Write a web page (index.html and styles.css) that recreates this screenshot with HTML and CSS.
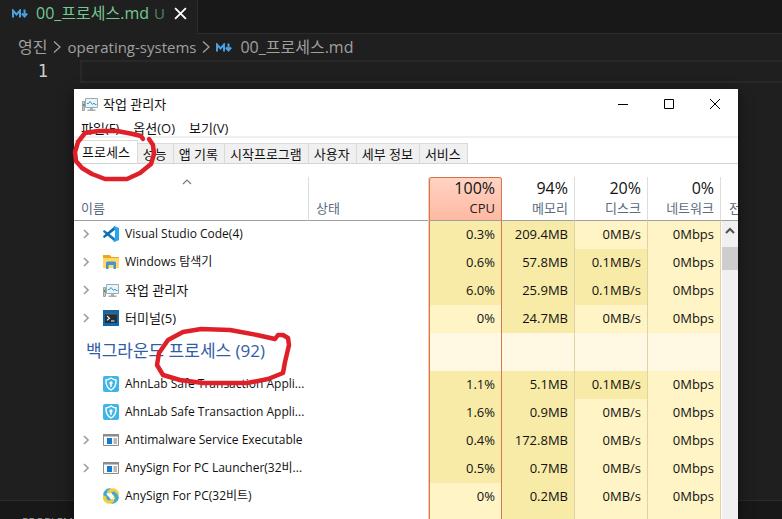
FILE: index.html
```html
<!DOCTYPE html>
<html lang="ko">
<head>
<meta charset="utf-8">
<title>작업 관리자</title>
<link rel="stylesheet" href="styles.css">
</head>
<body>
<svg class="defs" aria-hidden="true">
  <symbol id="markdown" viewBox="0 0 16 9"><path d="M1 8.500V1.500L4.500 5.500L8 1.500V8.500M12.500 .500V7M9.800 4.500L12.500 7.500L15.200 4.500" fill="none" stroke="#4a9fe0" stroke-width="2"/></symbol>
  <symbol id="chevron" viewBox="0 0 8 14"><path d="M1 1.500L7 7L1 12.500" fill="none" stroke="currentColor" stroke-width="1.300"/></symbol>
  <symbol id="expand" viewBox="0 0 6 10"><path d="M1 1L5 5L1 9" fill="none" stroke="#a0a0a0" stroke-width="1.700"/></symbol>
  <symbol id="monitor" viewBox="0 0 16 16"><path d="M3.500 2.500H15.500V11.500H3.500Z" fill="#e8f5fc" stroke="#a2a9ad"/><path d="M5 7.500H6.500L8 5.500L10.500 8.500L12 7L13 8.500H14.500" fill="none" stroke="#3c93c8"/><path d="M8 12H11V13.500H13.500V15H5.500V13.500H8Z" fill="#a7adb1"/><path d="M.500 5.500H2.500V14.500H.500Z" fill="#c4c8ca" stroke="#9ba1a5"/><path d="M1 8H2.500V10H1Z" fill="#41a548"/></symbol>
  <symbol id="vscode" viewBox="0 0 16 16"><path d="M0 5L1.500 4L12 12.200V16L.300 6Z" fill="#1479bd"/><path d="M0 11L1.500 12L12 3.800V0L.300 10Z" fill="#0b6dad"/><path d="M11.500 0L16 2V14L11.500 16L10.500 15.300L12 12V4L10.500 .700Z" fill="#29a5ec"/></symbol>
  <symbol id="folder" viewBox="0 0 16 16"><path d="M0 1H7L8.500 3H16V14H0Z" fill="#e5a91b"/><path d="M0 4H16V14H0Z" fill="#ffd76a"/><path d="M3 15V9Q3 7.500 4.500 7.500H11.500Q13 7.500 13 9V15H10.500V11H5.500V15Z" fill="#4794cc"/></symbol>
  <symbol id="terminal" viewBox="0 0 16 16"><path d="M0 0H16V16H0Z" fill="#0e68ae"/><path d="M2 3H14V13H2Z" fill="#252d35"/><path d="M2 3H14V4.500H2Z" fill="#56616a"/><path d="M4 6L6.500 8.200L4 10.400M8 11H11.500" fill="none" stroke="#fff" stroke-width="1.100"/></symbol>
  <symbol id="shield" viewBox="0 0 16 16"><rect width="16" height="16" rx="2" fill="#3fb5e5"/><path d="M8 2Q10.500 3.800 13 4Q13.500 11 8 14Q2.500 11 3 4Q5.500 3.800 8 2Z" fill="none" stroke="#fff" stroke-width="1.400"/><circle cx="8" cy="7" r="1.700" fill="#fff"/><path d="M7.300 7H8.700V11H7.300Z" fill="#fff"/></symbol>
  <symbol id="program" viewBox="0 0 16 16"><path d="M.500 2.500H15.500V13.500H.500Z" fill="#fafafa" stroke="#8c8c8c"/><path d="M0 2H16V4.500H0Z" fill="#8c8c8c"/><path d="M4 6H9V12H4Z" fill="#147bd1"/><path d="M10.500 7H14M10.500 9H14M10.500 11H14" stroke="#777"/></symbol>
  <symbol id="anysign" viewBox="0 0 16 16"><g fill="none" stroke-width="3.400"><path d="M6 11.500L2.800 8.300Q1 6 3 3.800Q5.500 1 8.500 2.800L11 5" stroke="#43a8cf"/><path d="M5 4.500L8 2.500Q11 1 13.200 3.500Q15.200 6.200 13.200 8.500L11 10.500" stroke="#f2cd3d"/><path d="M10 4.500L13.200 7.700Q15 10 13 12.200Q10.500 15 7.500 13.200L5 11" stroke="#43a8cf"/><path d="M10.500 12L8 13.500Q5 15 2.800 12.500Q1 10.500 2 8" stroke="#f2cd3d"/></g></symbol>
</svg>

<div class="editor">
  <div class="tabs">
    <div class="tab">
      <svg class="md"><use href="#markdown"/></svg>
      <span class="file">00_프로세스.md</span><span class="status">U</span>
      <button class="tab-close" aria-label="닫기"><svg viewBox="0 0 12 12"><path d="M1 1L11 11M11 1L1 11" fill="none" stroke="#fff" stroke-width="1.700"/></svg></button>
    </div>
    <div class="tabs-rest"></div>
  </div>
  <nav class="crumbs">
    <span class="file">영진</span><svg class="sep"><use href="#chevron"/></svg><span>operating-systems</span><svg class="sep"><use href="#chevron"/></svg><svg class="md"><use href="#markdown"/></svg><span class="file">00_프로세스.md</span>
  </nav>
  <div class="code"><span class="line-no">1</span><div class="line"></div></div>
  <div class="panel"><span>PROBLEMS</span></div>
</div>

<main class="window">
  <header class="titlebar">
    <svg class="icon"><use href="#monitor"/></svg><h1>작업 관리자</h1>
    <div class="controls">
      <button aria-label="최소화"><svg viewBox="0 0 12 12"><path d="M1 6.500H11" stroke="#000"/></svg></button>
      <button aria-label="최대화"><svg viewBox="0 0 12 12"><path d="M1.500 1.500H10.500V10.500H1.500Z" fill="none" stroke="#000"/></svg></button>
      <button aria-label="닫기"><svg viewBox="0 0 12 12"><path d="M1 1L11 11M11 1L1 11" stroke="#000"/></svg></button>
    </div>
  </header>
  <nav class="menu"><button>파일(F)</button><button>옵션(O)</button><button>보기(V)</button></nav>
  <div class="views" role="tablist">
    <button role="tab" aria-selected="true" class="active">프로세스</button><button role="tab">성능</button><button role="tab">앱 기록</button><button role="tab">시작프로그램</button><button role="tab">사용자</button><button role="tab">세부 정보</button><button role="tab">서비스</button>
  </div>
  <div class="list">
    <table>
      <colgroup><col class="c-name"><col><col class="c-num"><col class="c-num"><col class="c-num"><col class="c-num"><col class="c-end"></colgroup>
      <thead>
        <tr>
          <th class="name"><svg class="sort" viewBox="0 0 10 6"><path d="M1 5L5 1L9 5" fill="none" stroke="#777" stroke-width="1.200"/></svg>이름</th>
          <th class="state">상태</th>
          <th class="num cpu"><b>100%</b>CPU</th>
          <th class="num"><b>94%</b>메모리</th>
          <th class="num"><b>20%</b>디스크</th>
          <th class="num"><b>0%</b>네트워크</th>
          <th class="end">전</th>
        </tr>
      </thead>
      <tbody>
        <tr><td colspan="2"><div class="proc"><svg class="arrow"><use href="#expand"/></svg><svg class="icon"><use href="#vscode"/></svg>Visual Studio Code(4)</div></td><td class="num cpu mid">0.3%</td><td class="num mid">209.4MB</td><td class="num">0MB/s</td><td class="num">0Mbps</td><td></td></tr>
        <tr><td colspan="2"><div class="proc"><svg class="arrow"><use href="#expand"/></svg><svg class="icon"><use href="#folder"/></svg>Windows 탐색기</div></td><td class="num cpu mid">0.6%</td><td class="num mid">57.8MB</td><td class="num mid">0.1MB/s</td><td class="num">0Mbps</td><td></td></tr>
        <tr><td colspan="2"><div class="proc hangul"><svg class="arrow"><use href="#expand"/></svg><svg class="icon"><use href="#monitor"/></svg>작업 관리자</div></td><td class="num cpu mid">6.0%</td><td class="num mid">25.9MB</td><td class="num mid">0.1MB/s</td><td class="num">0Mbps</td><td></td></tr>
        <tr><td colspan="2"><div class="proc hangul"><svg class="arrow"><use href="#expand"/></svg><svg class="icon"><use href="#terminal"/></svg>터미널(5)</div></td><td class="num cpu">0%</td><td class="num mid">24.7MB</td><td class="num">0MB/s</td><td class="num">0Mbps</td><td></td></tr>
        <tr class="group"><td colspan="2">백그라운드 프로세스 (92)</td><td class="num cpu"></td><td class="num"></td><td class="num"></td><td class="num"></td><td></td></tr>
        <tr><td colspan="2"><div class="proc"><span class="arrow"></span><svg class="icon"><use href="#shield"/></svg>AhnLab Safe Transaction Appli...</div></td><td class="num cpu mid">1.1%</td><td class="num mid">5.1MB</td><td class="num mid">0.1MB/s</td><td class="num">0Mbps</td><td></td></tr>
        <tr><td colspan="2"><div class="proc"><span class="arrow"></span><svg class="icon"><use href="#shield"/></svg>AhnLab Safe Transaction Appli...</div></td><td class="num cpu mid">1.6%</td><td class="num mid">0.9MB</td><td class="num">0MB/s</td><td class="num">0Mbps</td><td></td></tr>
        <tr><td colspan="2"><div class="proc"><svg class="arrow"><use href="#expand"/></svg><svg class="icon"><use href="#program"/></svg>Antimalware Service Executable</div></td><td class="num cpu mid">0.4%</td><td class="num mid">172.8MB</td><td class="num">0MB/s</td><td class="num">0Mbps</td><td></td></tr>
        <tr><td colspan="2"><div class="proc"><svg class="arrow"><use href="#expand"/></svg><svg class="icon"><use href="#program"/></svg>AnySign For PC Launcher(32비...</div></td><td class="num cpu mid">0.5%</td><td class="num mid">0.7MB</td><td class="num">0MB/s</td><td class="num">0Mbps</td><td></td></tr>
        <tr><td colspan="2"><div class="proc"><span class="arrow"></span><svg class="icon"><use href="#anysign"/></svg>AnySign For PC(32비트)</div></td><td class="num cpu">0%</td><td class="num mid">0.2MB</td><td class="num">0MB/s</td><td class="num">0Mbps</td><td></td></tr>
        <tr><td colspan="2"></td><td class="num cpu"></td><td class="num mid"></td><td class="num"></td><td class="num"></td><td></td></tr>
      </tbody>
    </table>
    <div class="scrollbar"><svg viewBox="0 0 10 8"><path d="M1 6L5 2L9 6" fill="none" stroke="#505050" stroke-width="2"/></svg><div class="thumb"></div></div>
  </div>
</main>

<svg class="ink" aria-hidden="true" fill="none" stroke="#df2029" stroke-width="4.500" stroke-linecap="round" stroke-linejoin="round">
  <path d="M143 139L141 136L133 134L117 131L98 131L85 133L78 142L75 152L76 161L82 168L92 174L105 179L127 179L140 173L151 164L154 154L153 145L149 139"/>
  <path d="M275 339L257 335L230 330L201 329L183 332L168 340L159 353L157 365L163 375L180 380L203 383L247 383L268 379L283 373L285 362L289 345L288 338L283 335L278 335L275 339"/>
</svg>
</body>
</html>
```
FILE: styles.css
```css
* { box-sizing: border-box; }
body {
  margin: 0;
  height: 100vh;
  overflow: hidden;
  background: #1f1f1f;
  font: 13px/20px "Open Sans", "Noto Sans CJK KR", sans-serif;
}
button { border: 0; padding: 0; background: none; font: inherit; color: inherit; }
svg { display: block; flex: none; }
.defs { position: absolute; width: 0; height: 0; }

.editor { height: 100vh; display: flex; flex-direction: column; color: #a0a0a0; font-size: 15px; }
.file { font-size: 16px; }
.tabs { display: flex; height: 34px; }
.tab { display: flex; align-items: center; padding: 0 10px 8px 12px; color: #73c991; border-right: 1px solid #2b2b2b; }
.md { width: 16px; height: 9px; margin-right: 8px; }
.status { margin-left: 5px; color: #4f8762; }
.tab-close { margin-left: 9px; }
.tab-close svg { width: 13px; height: 13px; }
.tabs-rest { flex: 1; background: #181818; border-bottom: 1px solid #2b2b2b; }
.crumbs { display: flex; align-items: center; height: 26px; padding-left: 18px; }
.sep { width: 8px; height: 14px; margin: 0 6px; }
.code { flex: 1; display: flex; }
.line-no { width: 80px; padding-right: 32px; text-align: right; color: #ccc; font: 17px/22px "DejaVu Sans Mono", monospace; }
.line { flex: 1; height: 23px; border: 2px solid #282828; border-right: 0; }
.panel { height: 19px; padding: 11px 22px 0; background: #181818; border-top: 1px solid #2b2b2b; font-size: 11px; overflow: hidden; }

.window {
  position: absolute;
  inset: 89px 44px 0 74px;
  overflow: hidden;
  background: #fff;
  color: #111;
  box-shadow: 0 4px 12px #0008;
}
.icon { width: 16px; height: 16px; }
.titlebar { display: flex; align-items: center; height: 29px; padding-left: 8px; }
.titlebar h1 { margin: 0 0 0 5px; font-size: 13px; font-weight: 400; }
.controls { display: flex; margin-left: auto; }
.controls button { display: grid; place-items: center; width: 46px; height: 28px; }
.controls svg { width: 12px; height: 12px; }
.menu { display: flex; gap: 14px; height: 20px; padding-left: 7px; border-bottom: 2px solid #f0f0f0; }
.views { display: flex; align-items: flex-end; height: 26px; padding-left: 1px; border-bottom: 1px solid #d5d5d5; }
.views button { height: 20px; padding: 0 6px 0 5px; background: #f0f0f0; border: solid #d9d9d9; border-width: 1px 1px 0 0; line-height: 18px; }
.views .active { height: 23px; padding: 0 7px; background: #fff; }

.list { position: relative; padding-top: 13px; }
table { width: 100%; table-layout: fixed; border-collapse: separate; border-spacing: 0; }
.c-name { width: 235px; }
.c-num { width: 73px; }
.c-end { width: 17px; }
th { height: 44px; padding: 0 0 2px; border-bottom: 1px solid #a0a0a0; color: #5c6b80; font-weight: 400; text-align: left; vertical-align: bottom; line-height: 20px; }
th.name { padding-left: 7px; border-right: 1px solid #ddd; }
.sort { width: 10px; height: 6px; margin: 0 0 13px 101px; }
th.state { padding-left: 7px; }
th b { display: block; color: #111; font-size: 16px; font-weight: 400; line-height: 20px; }
th.end { padding-left: 8px; overflow: hidden; white-space: nowrap; }
.num { text-align: right; border-right: 1px solid #ddd; }
td { height: 28px; padding: 0 0 2px; white-space: nowrap; }
td.num { background: #fff4c5; border-right-color: #dfd2a5; }
td.mid { background: #f8eba8; }
th.num, td.num { padding-right: 6px; }
th.cpu { color: #222; background: linear-gradient(#ffd3c4, #ffb9a1); border-top: 1px solid #d0704a; border-radius: 3px 3px 0 0; }
th.num.cpu, td.num.cpu { border-left: 1px solid #d47850; border-right: 1px solid #d47850; box-shadow: -1px 0 #f9c9b0; }
.proc { display: flex; align-items: center; padding-left: 9px; font-size: 12px; }
.hangul { font-size: 13px; }
.arrow { width: 6px; height: 10px; margin-right: 14px; }
.proc .icon { margin-right: 6px; }
.group td { height: 38px; padding-left: 12px; color: #315ca8; font-size: 17px; }
.group td.num { background: #fff8e2; }
.scrollbar { position: absolute; top: 57px; right: 0; bottom: 0; width: 16px; padding-top: 6px; background: #f0f0f0; }
.scrollbar svg { width: 10px; height: 8px; margin: 0 auto 12px; }
.thumb { height: 23px; background: #cdcdcd; }
.ink { position: absolute; inset: 0; width: 100%; height: 100%; pointer-events: none; }
```
